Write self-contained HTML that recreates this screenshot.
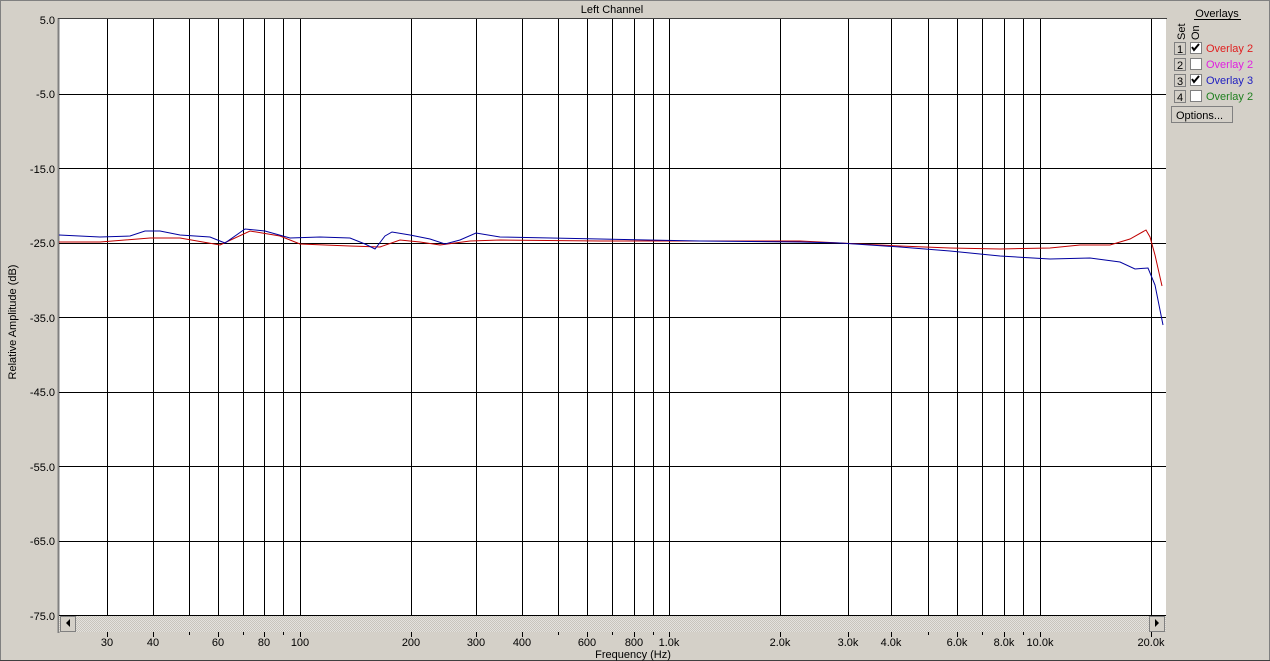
<!DOCTYPE html>
<html><head><meta charset="utf-8"><style>
body{margin:0;width:1270px;height:661px;background:#d4d0c8;font-family:"Liberation Sans",sans-serif;font-size:11px;overflow:hidden;position:relative}
</style></head><body>
<svg width="1270" height="661" style="position:absolute;left:0;top:0" font-family="Liberation Sans,sans-serif" font-size="11">
<defs><pattern id="h" width="2" height="2" patternUnits="userSpaceOnUse"><rect width="2" height="2" fill="#e4e2de"/><rect width="1" height="1" fill="#c8c4bc"/><rect x="1" y="1" width="1" height="1" fill="#c8c4bc"/></pattern></defs>
<rect x="0.5" y="0.5" width="1269" height="660" fill="none" stroke="#808080"/>
<line x1="0" y1="660.5" x2="1270" y2="660.5" stroke="#404040"/>
<rect x="59" y="19" width="1107" height="596" fill="#fff"/>
<line x1="58.5" y1="18" x2="58.5" y2="633" stroke="#808080" stroke-width="2"/>
<line x1="58" y1="18.5" x2="1167" y2="18.5" stroke="#404040"/>
<g stroke="#000" stroke-width="1">
<line x1="59" x2="1166" y1="94.5" y2="94.5"/><line x1="59" x2="1166" y1="168.5" y2="168.5"/>
<line x1="59" x2="1166" y1="243.5" y2="243.5"/><line x1="59" x2="1166" y1="317.5" y2="317.5"/>
<line x1="59" x2="1166" y1="392.5" y2="392.5"/><line x1="59" x2="1166" y1="466.5" y2="466.5"/>
<line x1="59" x2="1166" y1="541.5" y2="541.5"/><line x1="59" x2="1166" y1="615.5" y2="615.5"/>
<line x1="107.5" x2="107.5" y1="19" y2="615"/><line x1="153.5" x2="153.5" y1="19" y2="615"/>
<line x1="189.5" x2="189.5" y1="19" y2="615"/><line x1="218.5" x2="218.5" y1="19" y2="615"/>
<line x1="243.5" x2="243.5" y1="19" y2="615"/><line x1="264.5" x2="264.5" y1="19" y2="615"/>
<line x1="283.5" x2="283.5" y1="19" y2="615"/><line x1="300.5" x2="300.5" y1="19" y2="615"/>
<line x1="411.5" x2="411.5" y1="19" y2="615"/><line x1="476.5" x2="476.5" y1="19" y2="615"/>
<line x1="522.5" x2="522.5" y1="19" y2="615"/><line x1="558.5" x2="558.5" y1="19" y2="615"/>
<line x1="587.5" x2="587.5" y1="19" y2="615"/><line x1="612.5" x2="612.5" y1="19" y2="615"/>
<line x1="634.5" x2="634.5" y1="19" y2="615"/><line x1="653.5" x2="653.5" y1="19" y2="615"/>
<line x1="669.5" x2="669.5" y1="19" y2="615"/><line x1="780.5" x2="780.5" y1="19" y2="615"/>
<line x1="848.5" x2="848.5" y1="19" y2="615"/><line x1="891.5" x2="891.5" y1="19" y2="615"/>
<line x1="928.5" x2="928.5" y1="19" y2="615"/><line x1="957.5" x2="957.5" y1="19" y2="615"/>
<line x1="982.5" x2="982.5" y1="19" y2="615"/><line x1="1004.5" x2="1004.5" y1="19" y2="615"/>
<line x1="1023.5" x2="1023.5" y1="19" y2="615"/><line x1="1040.5" x2="1040.5" y1="19" y2="615"/>
<line x1="1151.5" x2="1151.5" y1="19" y2="615"/>
</g>
<polyline fill="none" stroke="#c00000" stroke-width="1" points="59,242 100,242 150,238 180,238 220,245 250,231 280,236 300,244 350,246 380,247 400,240 420,242 440,245 470,241 500,240 600,241 800,241 900,246 950,248 1000,249 1050,248 1080,245 1110,245 1130,239 1146,230 1150,237 1155,255 1162,286"/>
<polyline fill="none" stroke="#0000a0" stroke-width="1" points="59,235 100,237 130,236 145,231 160,231 180,235 210,237 225,243 245,229 265,231 290,238 320,237 350,238 365,244 375,249 385,236 392,232 410,235 430,239 445,244 460,240 476,233 500,237 600,239 700,241 800,242 840,243 900,247 950,251 1000,256 1050,259 1090,258 1120,262 1135,269 1148,268 1155,285 1160,310 1163,325"/>
<rect x="59" y="616" width="1107" height="16" fill="url(#h)"/>
<rect x="60.5" y="616.5" width="15" height="15" fill="#d4d0c8" stroke="#808080"/>
<polygon points="70,619 70,627 66,623" fill="#000"/>
<rect x="1149.5" y="616.5" width="15" height="15" fill="#d4d0c8" stroke="#808080"/>
<polygon points="1155,619 1155,627 1159,623" fill="#000"/>
<g stroke="#000"><line x1="107.5" x2="107.5" y1="632" y2="637"/><line x1="153.5" x2="153.5" y1="632" y2="637"/><line x1="189.5" x2="189.5" y1="632" y2="635"/><line x1="218.5" x2="218.5" y1="632" y2="637"/><line x1="243.5" x2="243.5" y1="632" y2="635"/><line x1="264.5" x2="264.5" y1="632" y2="637"/><line x1="283.5" x2="283.5" y1="632" y2="635"/><line x1="300.5" x2="300.5" y1="632" y2="637"/><line x1="411.5" x2="411.5" y1="632" y2="637"/><line x1="476.5" x2="476.5" y1="632" y2="637"/><line x1="522.5" x2="522.5" y1="632" y2="637"/><line x1="558.5" x2="558.5" y1="632" y2="635"/><line x1="587.5" x2="587.5" y1="632" y2="637"/><line x1="612.5" x2="612.5" y1="632" y2="635"/><line x1="634.5" x2="634.5" y1="632" y2="637"/><line x1="653.5" x2="653.5" y1="632" y2="635"/><line x1="669.5" x2="669.5" y1="632" y2="637"/><line x1="780.5" x2="780.5" y1="632" y2="637"/><line x1="848.5" x2="848.5" y1="632" y2="637"/><line x1="891.5" x2="891.5" y1="632" y2="637"/><line x1="928.5" x2="928.5" y1="632" y2="635"/><line x1="957.5" x2="957.5" y1="632" y2="637"/><line x1="982.5" x2="982.5" y1="632" y2="635"/><line x1="1004.5" x2="1004.5" y1="632" y2="637"/><line x1="1023.5" x2="1023.5" y1="632" y2="635"/><line x1="1040.5" x2="1040.5" y1="632" y2="637"/><line x1="1151.5" x2="1151.5" y1="632" y2="637"/></g>
<g text-anchor="middle" fill="#000">
<text x="107" y="646">30</text><text x="153" y="646">40</text><text x="218" y="646">60</text><text x="264" y="646">80</text><text x="300" y="646">100</text><text x="411" y="646">200</text><text x="476" y="646">300</text><text x="522" y="646">400</text><text x="587" y="646">600</text><text x="634" y="646">800</text><text x="669" y="646">1.0k</text><text x="780" y="646">2.0k</text><text x="848" y="646">3.0k</text><text x="891" y="646">4.0k</text><text x="957" y="646">6.0k</text><text x="1004" y="646">8.0k</text><text x="1040" y="646">10.0k</text><text x="1151" y="646">20.0k</text>
<text x="612" y="13">Left Channel</text>
<text x="633" y="658">Frequency (Hz)</text>
<text x="1217" y="17">Overlays</text>
</g>
<g text-anchor="end" fill="#000">
<text x="55" y="24">5.0</text><text x="55" y="98">-5.0</text><text x="55" y="173">-15.0</text><text x="55" y="247">-25.0</text><text x="55" y="322">-35.0</text><text x="55" y="396">-45.0</text><text x="55" y="471">-55.0</text><text x="55" y="545">-65.0</text><text x="55" y="620">-75.0</text>
</g>
<text transform="translate(16,322) rotate(-90)" text-anchor="middle">Relative Amplitude (dB)</text>
<line x1="1194" x2="1241" y1="19.5" y2="19.5" stroke="#000"/>
<text transform="translate(1185,40) rotate(-90)">Set</text>
<text transform="translate(1199,40) rotate(-90)">On</text>
<g><rect x="1174.5" y="42.5" width="11" height="12" fill="#d4d0c8" stroke="#808080"/><text x="1177" y="53">1</text><rect x="1190.5" y="42.5" width="11" height="11" fill="#fff" stroke="#808080"/><path d="M1192,47 l2,3 l5,-6" stroke="#000" stroke-width="2" fill="none"/><text x="1206" y="52" fill="#e02020">Overlay 2</text></g>
<g><rect x="1174.5" y="58.5" width="11" height="12" fill="#d4d0c8" stroke="#808080"/><text x="1177" y="69">2</text><rect x="1190.5" y="58.5" width="11" height="11" fill="#fff" stroke="#808080"/><text x="1206" y="68" fill="#e020e0">Overlay 2</text></g>
<g><rect x="1174.5" y="74.5" width="11" height="12" fill="#d4d0c8" stroke="#808080"/><text x="1177" y="85">3</text><rect x="1190.5" y="74.5" width="11" height="11" fill="#fff" stroke="#808080"/><path d="M1192,79 l2,3 l5,-6" stroke="#000" stroke-width="2" fill="none"/><text x="1206" y="84" fill="#2020c0">Overlay 3</text></g>
<g><rect x="1174.5" y="90.5" width="11" height="12" fill="#d4d0c8" stroke="#808080"/><text x="1177" y="101">4</text><rect x="1190.5" y="90.5" width="11" height="11" fill="#fff" stroke="#808080"/><text x="1206" y="100" fill="#208020">Overlay 2</text></g>
<rect x="1171.5" y="106.5" width="61" height="16" fill="#d4d0c8" stroke="#808080"/>
<text x="1176" y="119">Options...</text>
</svg>
</body></html>
